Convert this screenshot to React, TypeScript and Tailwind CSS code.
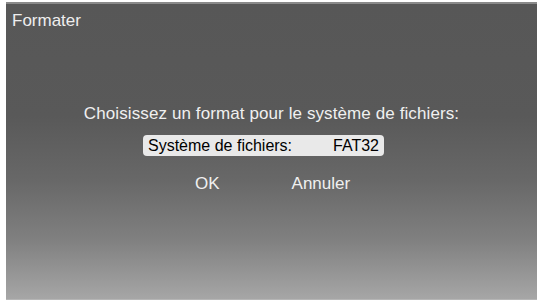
export default function App() {
  return (
    <div className="w-[540px] h-[301px] bg-white pt-[2px] pl-[6px] pr-[3px] pb-[1px]" style={{ fontFamily: '"Liberation Sans", Arial, sans-serif' }}>
      <div className="h-full w-full flex flex-col border-t-2 border-t-[#8a8a8a] border-b border-b-[#b5b5b5] bg-[linear-gradient(to_bottom,#575757_0%,#595959_38%,#686868_60%,#808080_80%,#a6a6a6_100%)]">
        <div className="pl-[6px] pt-[7px] text-[17px] leading-[19px] text-[#eeeeee]">Formater</div>
        <div className="mt-[74px] text-center text-[17px] leading-[19px] tracking-[0.1px] text-[#f0f0f0]">Choisissez un format pour le système de fichiers:</div>
        <div className="mt-[12px] flex justify-center">
          <div className="ml-[-16px] w-[241px] h-[21px] rounded-[4px] bg-[#e9e9e9] flex items-center justify-between px-[5px] text-[16px] leading-[18px] text-black">
            <span>Système de fichiers:</span>
            <span>FAT32</span>
          </div>
        </div>
        <div className="mt-[18px] flex text-[17px] leading-[19px] text-[#f0f0f0]">
          <span className="ml-[189px]">OK</span>
          <span className="ml-[72px]">Annuler</span>
        </div>
      </div>
    </div>
  );
}
